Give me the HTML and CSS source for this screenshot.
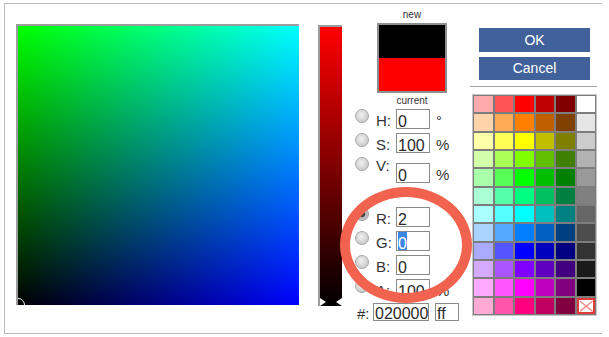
FILE: index.html
```html
<!DOCTYPE html>
<html>
<head>
<meta charset="utf-8">
<link rel="stylesheet" href="styles.css">
</head>
<body>
<div class="dialog">
  <div class="field"><span class="field-marker"></span></div>
  <div class="huebar"><span class="arrow arrow-l"></span><span class="arrow arrow-r"></span></div>
  <div class="controls">
    <div class="cap cap-new">new</div>
    <div class="swatch"><div class="sw-new"></div><div class="sw-cur"></div></div>
    <div class="cap cap-cur">current</div>
    <div class="row"><span class="radio"></span><span class="lbl">H:</span><span class="inp">0</span><span class="unit">°</span></div>
    <div class="row"><span class="radio"></span><span class="lbl">S:</span><span class="inp">100</span><span class="unit">%</span></div>
    <div class="row row-v"><span class="radio radio-v"></span><span class="lbl lbl-v">V:</span><span class="inp inp-v">0</span><span class="unit unit-v">%</span></div>
    <div class="row row-gap"><span class="radio checked"></span><span class="lbl">R:</span><span class="inp">2</span></div>
    <div class="row"><span class="radio"></span><span class="lbl">G:</span><span class="inp"><span class="sel">0</span></span></div>
    <div class="row"><span class="radio"></span><span class="lbl">B:</span><span class="inp">0</span></div>
    <div class="row"><span class="radio"></span><span class="lbl">A:</span><span class="inp">100</span><span class="unit">%</span></div>
    <div class="row row-hash"><span class="lbl lbl-hash">#:</span><span class="inp inp-hex">020000</span><span class="inp inp-alpha">ff</span></div>
  </div>
  <div class="side">
    <button class="btn btn-ok">OK</button>
    <button class="btn btn-cancel">Cancel</button>
    <div class="sep"></div>
    <div class="palette">
      <span class="cell" style="background:#ffaaaa"></span><span class="cell" style="background:#ff5555"></span><span class="cell" style="background:#ff0000"></span><span class="cell" style="background:#bf0000"></span><span class="cell" style="background:#800000"></span><span class="cell" style="background:#ffffff"></span>
      <span class="cell" style="background:#ffd4aa"></span><span class="cell" style="background:#ffaa55"></span><span class="cell" style="background:#ff8000"></span><span class="cell" style="background:#bf6000"></span><span class="cell" style="background:#804000"></span><span class="cell" style="background:#e6e6e6"></span>
      <span class="cell" style="background:#ffffaa"></span><span class="cell" style="background:#ffff55"></span><span class="cell" style="background:#ffff00"></span><span class="cell" style="background:#bfbf00"></span><span class="cell" style="background:#808000"></span><span class="cell" style="background:#cccccc"></span>
      <span class="cell" style="background:#d4ffaa"></span><span class="cell" style="background:#aaff55"></span><span class="cell" style="background:#80ff00"></span><span class="cell" style="background:#60bf00"></span><span class="cell" style="background:#408000"></span><span class="cell" style="background:#b3b3b3"></span>
      <span class="cell" style="background:#aaffaa"></span><span class="cell" style="background:#55ff55"></span><span class="cell" style="background:#00ff00"></span><span class="cell" style="background:#00bf00"></span><span class="cell" style="background:#008000"></span><span class="cell" style="background:#999999"></span>
      <span class="cell" style="background:#aaffd4"></span><span class="cell" style="background:#55ffaa"></span><span class="cell" style="background:#00ff80"></span><span class="cell" style="background:#00bf60"></span><span class="cell" style="background:#008040"></span><span class="cell" style="background:#808080"></span>
      <span class="cell" style="background:#aaffff"></span><span class="cell" style="background:#55ffff"></span><span class="cell" style="background:#00ffff"></span><span class="cell" style="background:#00bfbf"></span><span class="cell" style="background:#008080"></span><span class="cell" style="background:#666666"></span>
      <span class="cell" style="background:#aad4ff"></span><span class="cell" style="background:#55aaff"></span><span class="cell" style="background:#0080ff"></span><span class="cell" style="background:#0060bf"></span><span class="cell" style="background:#004080"></span><span class="cell" style="background:#4d4d4d"></span>
      <span class="cell" style="background:#aaaaff"></span><span class="cell" style="background:#5555ff"></span><span class="cell" style="background:#0000ff"></span><span class="cell" style="background:#0000bf"></span><span class="cell" style="background:#000080"></span><span class="cell" style="background:#333333"></span>
      <span class="cell" style="background:#d4aaff"></span><span class="cell" style="background:#aa55ff"></span><span class="cell" style="background:#8000ff"></span><span class="cell" style="background:#6000bf"></span><span class="cell" style="background:#400080"></span><span class="cell" style="background:#1a1a1a"></span>
      <span class="cell" style="background:#ffaaff"></span><span class="cell" style="background:#ff55ff"></span><span class="cell" style="background:#ff00ff"></span><span class="cell" style="background:#bf00bf"></span><span class="cell" style="background:#800080"></span><span class="cell" style="background:#000000"></span>
      <span class="cell" style="background:#ffaad4"></span><span class="cell" style="background:#ff55aa"></span><span class="cell" style="background:#ff0080"></span><span class="cell" style="background:#bf0060"></span><span class="cell" style="background:#800040"></span><span class="cell cell-none"><svg viewBox="0 0 16 13" preserveAspectRatio="none"><path d="M1 1 L15 12 M15 1 L1 12" stroke="#f08a8a" stroke-width="1.4" fill="none"/></svg></span>
    </div>
  </div>
  <div class="annot"></div>
</div>
</body>
</html>
```

FILE: styles.css
```css
html, body {
  margin: 0;
  padding: 0;
  background: #fff;
}
body {
  font-family: "Liberation Sans", Arial, sans-serif;
  color: #333;
}
.dialog {
  position: relative;
  margin: 3px 0 0 4px;
  width: 597px;
  height: 329px;
  border: 1px solid #b6bbbf;
  border-right: none;
  display: flex;
  align-items: flex-start;
}
.field {
  position: relative;
  overflow: hidden;
  margin: 20px 0 0 11px;
  width: 281px;
  height: 279px;
  border-top: 2px solid #9c9c9c;
  border-left: 2px solid #9c9c9c;
  background: linear-gradient(to bottom, #00ff00, #000000), linear-gradient(to right, #000000, #0000ff);
  background-blend-mode: screen;
}
.field-marker {
  position: absolute;
  left: -7px;
  bottom: -7px;
  width: 14px;
  height: 14px;
  box-sizing: border-box;
  border: 1.5px solid #f4f4f4;
  border-radius: 50%;
}
.huebar {
  position: relative;
  margin: 21px 0 0 19px;
  width: 22px;
  height: 279px;
  border-top: 2px solid #9c9c9c;
  border-left: 2px solid #9c9c9c;
  background: linear-gradient(to bottom, #ff0000, #000000);
}
.arrow {
  position: absolute;
  bottom: 0;
  width: 0;
  height: 0;
  border-top: 4px solid transparent;
  border-bottom: 4px solid transparent;
}
.arrow-l {
  left: 0;
  border-left: 6px solid #fff;
}
.arrow-r {
  right: 0;
  border-right: 6px solid #fff;
}
.controls {
  margin: 5px 0 0 13px;
  width: 115px;
}
.cap {
  margin-left: 22px;
  width: 70px;
  text-align: center;
  font-size: 10px;
  line-height: 12px;
  color: #333;
}
.swatch {
  margin: 2px 0 0 22px;
  width: 66px;
  height: 66px;
  border: 2px solid #8e8e8e;
}
.sw-new {
  height: 33px;
  background: #000;
}
.sw-cur {
  height: 33px;
  background: #ff0000;
}
.cap-cur {
  margin-top: 2px;
  margin-bottom: 2px;
}
.row {
  display: flex;
  align-items: flex-start;
  height: 20px;
  margin-bottom: 4px;
}
.row-v {
  height: 26px;
}
.row-gap {
  margin-top: 24px;
}
.radio {
  box-sizing: border-box;
  width: 14px;
  height: 14px;
  margin: 0 0 0 0;
  border-radius: 50%;
  border: 1px solid #a9a9a9;
  background: radial-gradient(circle at 45% 40%, #f2f2f2 0%, #d4d4d4 55%, #b9b9b9 100%);
}
.radio-v {
  margin-top: 0;
}
.radio.checked {
  border-color: #999;
  background: radial-gradient(circle, #444 0, #444 2.8px, #b4b4b4 3.6px, #d2d2d2 100%);
}
.lbl {
  box-sizing: border-box;
  width: 20px;
  margin-left: 7px;
  padding-top: 3px;
  font-size: 15px;
  line-height: 17px;
  color: #333;
}
.lbl-v {
  padding-top: 0;
}
.inp {
  box-sizing: border-box;
  width: 34px;
  height: 20px;
  border: 1px solid #8a8a8a;
  background: #fff;
  padding: 4px 0 0 1px;
  font-size: 16px;
  line-height: 16px;
  color: #2a2a2a;
  overflow: hidden;
  white-space: nowrap;
}
.inp-v {
  margin-top: 6px;
}
.sel {
  display: inline-block;
  vertical-align: top;
  box-sizing: border-box;
  height: 18px;
  margin-top: -4px;
  padding-top: 4px;
  background: #3a86e2;
  color: #fff;
}
.unit {
  margin-left: 6px;
  padding-top: 3px;
  font-size: 15px;
  line-height: 17px;
  color: #333;
}
.unit-v {
  margin-top: 6px;
}
.row-hash {
  height: 18px;
}
.lbl-hash {
  width: 16px;
  margin-left: 2px;
  padding-top: 2px;
}
.row-hash .inp {
  height: 18px;
  padding-top: 2px;
}
.inp-hex {
  width: 56px;
}
.inp-alpha {
  width: 24px;
  margin-left: 6px;
}
.side {
  margin-top: 24px;
  width: 127px;
}
.btn {
  display: block;
  margin-left: 9px;
  width: 111px;
  padding: 0;
  border: none;
  background: #41619b;
  color: #fff;
  font-family: "Liberation Sans", Arial, sans-serif;
  font-size: 14px;
  text-align: center;
}
.btn-ok {
  height: 24px;
  line-height: 24px;
}
.btn-cancel {
  margin-top: 5px;
  height: 23px;
  line-height: 23px;
}
.sep {
  margin-top: 6px;
  height: 1px;
  background: #a4a4a4;
}
.palette {
  box-sizing: border-box;
  margin: 7px 0 0 2px;
  width: 125px;
  height: 222px;
  border: 1px solid #c6c6c6;
  padding: 1px;
  background: #7d7d7d;
  display: grid;
  grid-template-columns: repeat(6, 1fr);
  grid-template-rows: repeat(12, 1fr);
  gap: 2px;
}
.cell {
  display: block;
}
.cell-none {
  box-sizing: border-box;
  background: #fff;
  border: 2px solid #e23a3a;
}
.cell-none svg {
  display: block;
  width: 100%;
  height: 100%;
}
.annot {
  position: absolute;
  left: 335px;
  top: 183px;
  width: 132px;
  height: 116px;
  box-sizing: border-box;
  border: 10px solid #f2634f;
  border-radius: 50%;
}
```
